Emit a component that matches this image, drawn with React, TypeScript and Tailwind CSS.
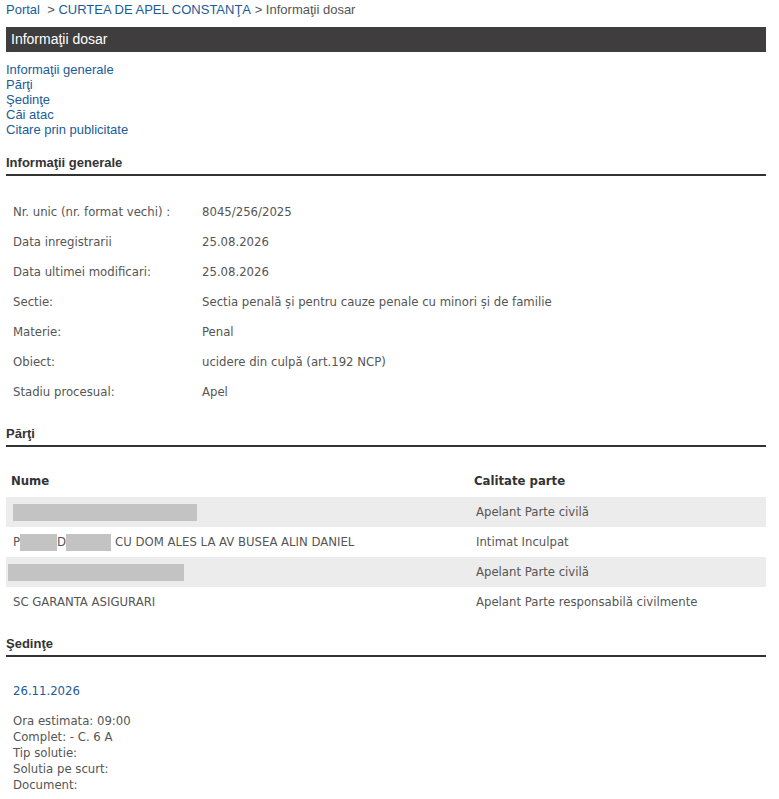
import React from "react";

const arial = { fontFamily: '"Liberation Sans", Arial, sans-serif' };
const tahoma = { fontFamily: '"DejaVu Sans Condensed", "DejaVu Sans", sans-serif', fontStretch: "condensed" as const };

const info: [string, string][] = [
  ["Nr. unic (nr. format vechi) :", "8045/256/2025"],
  ["Data inregistrarii", "25.08.2026"],
  ["Data ultimei modificari:", "25.08.2026"],
  ["Sectie:", "Sectia penală și pentru cauze penale cu minori și de familie"],
  ["Materie:", "Penal"],
  ["Obiect:", "ucidere din culpă (art.192 NCP)"],
  ["Stadiu procesual:", "Apel"],
];

function Heading({ children }: { children: React.ReactNode }) {
  return (
    <div className="border-b-2 border-[#333] pb-[3px] text-[13px] font-bold leading-[16px] text-[#333]" style={arial}>
      {children}
    </div>
  );
}

function Hidden({ w }: { w: string }) {
  return <span className={`inline-block h-[17px] bg-[#c3c3c3] align-middle ${w}`} />;
}

export default function App() {
  return (
    <div className="min-h-[799px] w-[779px] bg-white">
      <div className="ml-[6px] w-[760px]">
        <div className="pt-[2px] text-[13px] leading-[16px] text-[#555]" style={arial}>
          <span className="text-[#1a5c99]">Portal</span>
          <span>&nbsp; &gt; </span>
          <span className="text-[#1a5c99]">CURTEA DE APEL CONSTANŢA</span>
          <span>&nbsp;&gt; Informaţii dosar</span>
        </div>

        <div className="mt-[9px] flex h-[25px] items-center bg-[#3f3d3e] pl-[5px] text-[14px] text-white" style={arial}>
          Informaţii dosar
        </div>

        <div className="mt-[10px] flex flex-col text-[13px] leading-[15px] text-[#1a5c99]" style={arial}>
          <span>Informaţii generale</span>
          <span>Părţi</span>
          <span>Şedinţe</span>
          <span>Căi atac</span>
          <span>Citare prin publicitate</span>
        </div>

        <div className="mt-[18px]">
          <Heading>Informaţii generale</Heading>
        </div>

        <div className="mt-[21px] flex flex-col text-[13px] text-[#555]" style={tahoma}>
          {info.map(([k, v]) => (
            <div key={k} className="flex h-[30px] items-center">
              <span className="w-[196px] pl-[7px]">{k}</span>
              <span>{v}</span>
            </div>
          ))}
        </div>

        <div className="mt-[19px]">
          <Heading>Părţi</Heading>
        </div>

        <div className="mt-[18px] text-[13px] text-[#555]" style={tahoma}>
          <div className="flex h-[32px] items-center font-bold text-[#333]">
            <span className="w-[468px] pl-[5px]">Nume</span>
            <span>Calitate parte</span>
          </div>
          <div className="flex h-[30px] items-center bg-[#ececec]">
            <span className="flex w-[470px] items-center pl-[7px]">
              <Hidden w="w-[184px]" />
            </span>
            <span>Apelant Parte civilă</span>
          </div>
          <div className="flex h-[30px] items-center">
            <span className="flex w-[470px] items-center pl-[7px]">
              P<Hidden w="w-[37px]" />D<Hidden w="w-[45px]" />
              <span className="ml-[4px]">CU DOM ALES LA AV BUSEA ALIN DANIEL</span>
            </span>
            <span>Intimat Inculpat</span>
          </div>
          <div className="flex h-[30px] items-center bg-[#ececec]">
            <span className="flex w-[470px] items-center pl-[2px]">
              <Hidden w="w-[176px]" />
            </span>
            <span>Apelant Parte civilă</span>
          </div>
          <div className="flex h-[30px] items-center">
            <span className="w-[470px] pl-[7px]">SC GARANTA ASIGURARI</span>
            <span>Apelant Parte responsabilă civilmente</span>
          </div>
        </div>

        <div className="mt-[19px]">
          <Heading>Şedinţe</Heading>
        </div>

        <div className="pl-[7px] text-[13px] text-[#555]" style={tahoma}>
          <div className="mt-[26px] leading-[16px] text-[#1a5c99]">26.11.2026</div>
          <div className="mt-[14px] flex flex-col leading-[16px]">
            <span>Ora estimata: 09:00</span>
            <span>Complet: - C. 6 A</span>
            <span>Tip solutie:</span>
            <span>Solutia pe scurt:</span>
            <span>Document:</span>
          </div>
        </div>
      </div>
    </div>
  );
}
